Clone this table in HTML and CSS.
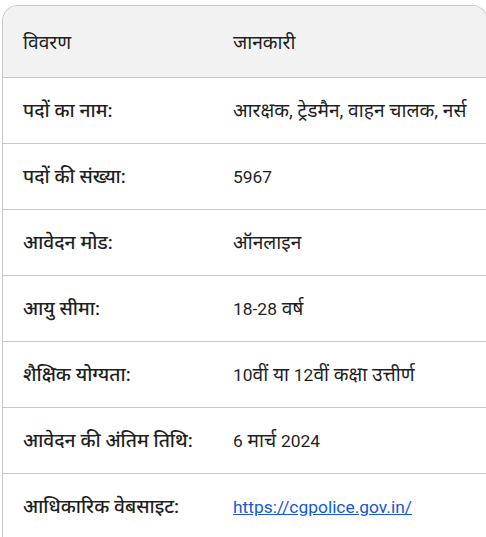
FILE: index.html
```html
<!DOCTYPE html>
<html lang="hi">
<head>
<meta charset="utf-8">
<link rel="stylesheet" href="styles.css">
</head>
<body>
<div class="card">
  <table class="info">
    <thead>
      <tr><th>विवरण</th><th>जानकारी</th></tr>
    </thead>
    <tbody>
      <tr><td class="label">पदों का नाम:</td><td>आरक्षक, ट्रेडमैन, वाहन चालक, नर्स</td></tr>
      <tr><td class="label">पदों की संख्या:</td><td><span class="lat">5967</span></td></tr>
      <tr><td class="label">आवेदन मोड:</td><td>ऑनलाइन</td></tr>
      <tr><td class="label">आयु सीमा:</td><td><span class="lat">18-28</span> वर्ष</td></tr>
      <tr><td class="label">शैक्षिक योग्यता:</td><td><span class="lat">10</span>वीं या <span class="lat">12</span>वीं कक्षा उत्तीर्ण</td></tr>
      <tr><td class="label">आवेदन की अंतिम तिथि:</td><td><span class="lat">6</span> मार्च <span class="lat">2024</span></td></tr>
      <tr class="last"><td class="label">आधिकारिक वेबसाइट:</td><td><a href="#" class="link lat">https://cgpolice.gov.in/</a></td></tr>
    </tbody>
  </table>
</div>
</body>
</html>
```
FILE: styles.css
```css
html, body { margin: 0; padding: 0; background: #fff; }
body {
  padding: 5px 0 0 2px;
  font-family: "Roboto", "Noto Sans", "Noto Sans Devanagari", sans-serif;
  color: #1f1f1f;
  font-size: 19.2px;
  overflow: hidden;
  height: 537px;
  box-sizing: border-box;
}
.card {
  width: 484px;
  border: 1px solid #c7c7c7;
  border-bottom: 0;
  border-radius: 16px 16px 0 0;
  overflow: hidden;
}
.info {
  width: 100%;
  border-collapse: collapse;
}
.info th {
  background: #f2f2f2;
  font-weight: 400;
  text-align: left;
  height: 71px;
  padding: 0 0 0 20px;
  border-bottom: 1px solid #c7c7c7;
}
.info td {
  height: 65px;
  padding: 0 0 0 20px;
  border-bottom: 1px solid #c7c7c7;
  vertical-align: middle;
  line-height: 24px;
}
.info .last td {
  border-bottom: 0;
  vertical-align: top;
  padding-top: 21px;
  height: 43px;
}
.info th:first-child, .info td:first-child { width: 190px; }
.label { font-weight: 500; }
.lat { font-size: 17.4px; }
.link { color: #1558d6; text-decoration: underline; }
```
